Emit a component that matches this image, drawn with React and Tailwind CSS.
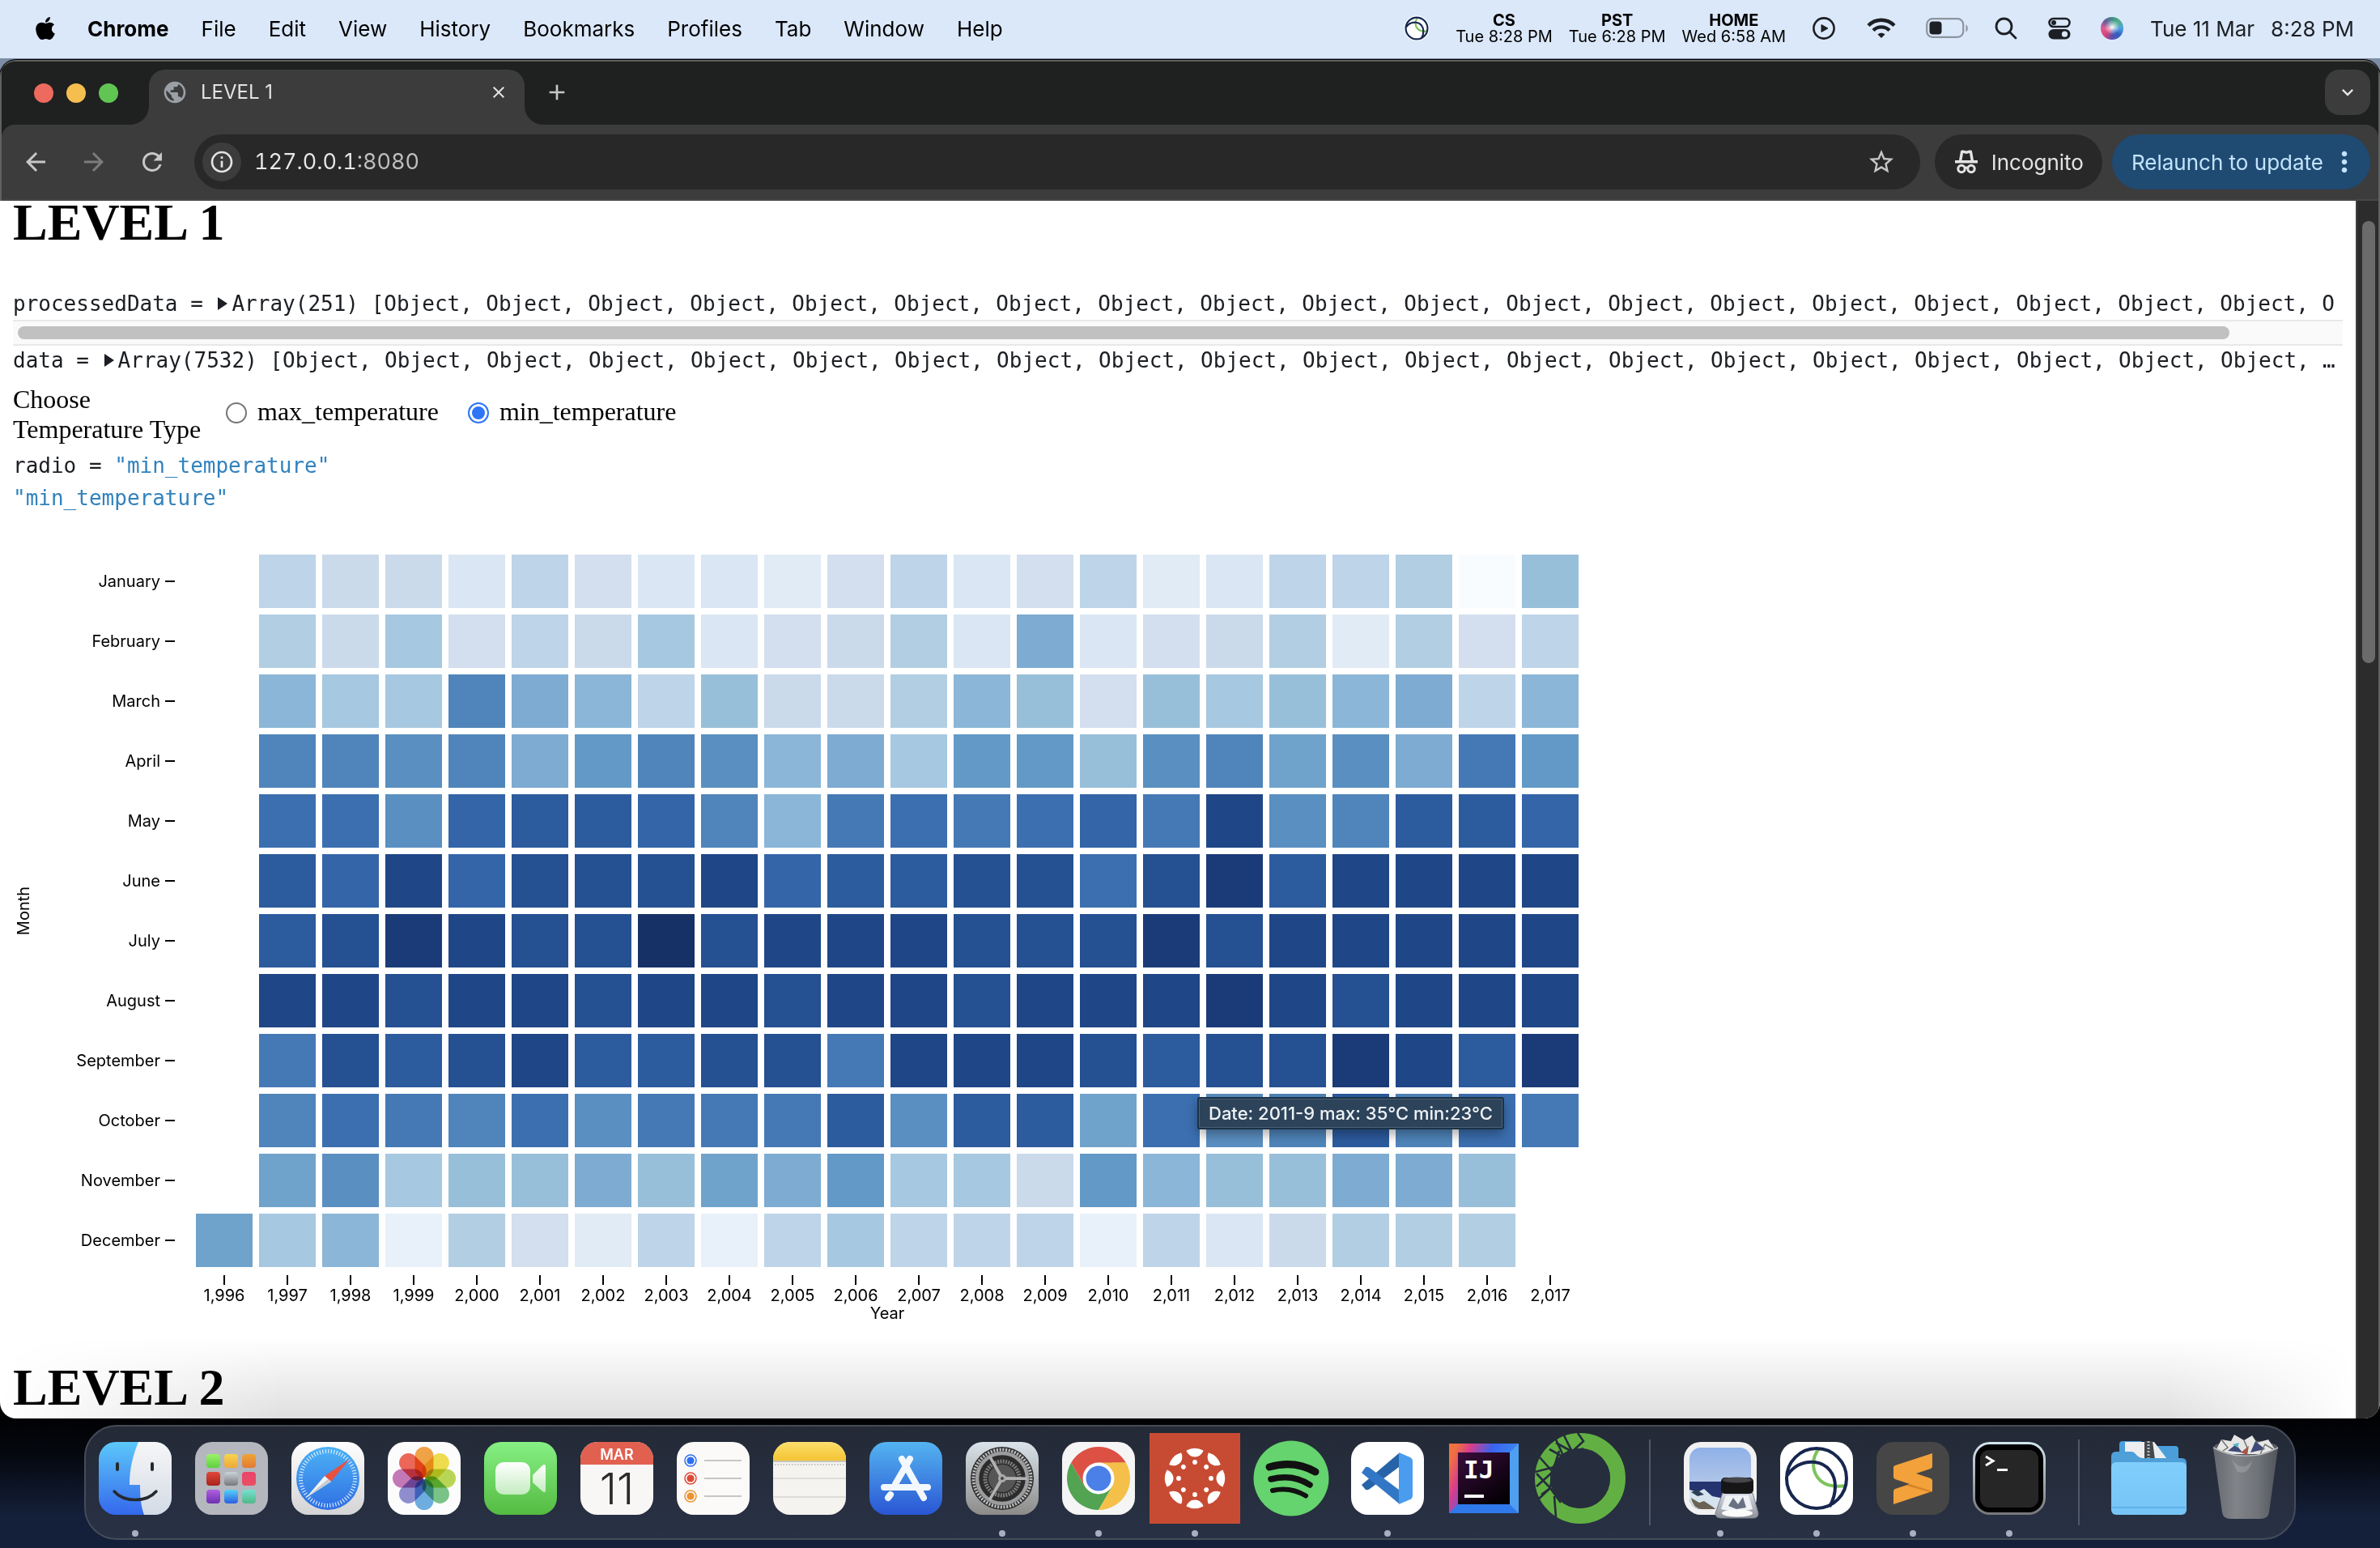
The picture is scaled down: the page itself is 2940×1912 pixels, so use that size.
import React, { useState } from "react";
import { FaApple } from "react-icons/fa";
import { MdArrowBack, MdArrowForward, MdRefresh, MdStarBorder, MdClose, MdAdd, MdPublic, MdInfoOutline, MdMoreVert, MdKeyboardArrowDown } from "react-icons/md";

/* ---------- Menu bar ---------- */

const MENUS = ["File", "Edit", "View", "History", "Bookmarks", "Profiles", "Tab", "Window", "Help"];
const CLOCKS = [
  ["CS", "Tue 8:28 PM"],
  ["PST", "Tue 6:28 PM"],
  ["HOME", "Wed 6:58 AM"],
];

function OrbitMark({ width = 4 }) {
  return (
    <g fill="none" strokeWidth={width}>
      <path d="M59 19C49 32 50 49 61 59C69 66 79 67 93 65" stroke="#7dc35b" />
      <circle cx="56" cy="56" r="37" stroke="#16264f" />
      <path d="M20 52C29 39 41 35 54 36C70 38 79 51 79 66C79 76 76 84 72 91" stroke="#16264f" />
    </g>
  );
}

function MenuBar() {
  return (
    <header className="flex h-[72px] shrink-0 items-center justify-between bg-[#dbe8fa] pb-0.5 pl-10 pr-8 text-[26px] text-black">
      <nav className="flex items-center gap-10">
        <button aria-label="Apple menu"><FaApple className="size-[32px]" /></button>
        <button className="-ml-1 font-bold">Chrome</button>
        {MENUS.map((m) => <button key={m}>{m}</button>)}
      </nav>
      <div className="flex items-center text-[#1c1f24]">
        <svg viewBox="12 12 88 88" className="mr-8 size-[32px]"><circle cx="56" cy="56" r="43" fill="#fff" /><OrbitMark width={6} /></svg>
        <div className="mr-[32px] flex gap-5 text-center text-xl leading-5 text-black">
          {CLOCKS.map(([n, t]) => (
            <div key={n}><div className="font-bold">{n}</div><div>{t}</div></div>
          ))}
        </div>
        <svg viewBox="0 0 30 30" className="mr-[38px] size-[30px]" fill="none" stroke="currentColor" strokeWidth="2.6"><circle cx="15" cy="15" r="12.6" /><path d="M12 10.5L20 15L12 19.5Z" fill="currentColor" strokeWidth="1" /></svg>
        <svg viewBox="0 0 36 28" className="mr-[37px] h-[28px] w-[36px]" fill="none" stroke="currentColor" strokeWidth="4.4"><path d="M2 10.5C11 1.500 25 1.500 34 10.500" /><path d="M8 16.500C13.500 11 22.500 11 28 16.500" /><path d="M13.500 21.500C16 19 20 19 22.500 21.500L18 26Z" fill="currentColor" stroke="none" /></svg>
        <svg viewBox="0 0 52 26" className="mr-[33px] h-[26px] w-[52px]"><rect x="1.200" y="1.200" width="45" height="22.600" rx="7" fill="none" stroke="#8d949e" strokeWidth="2.200" /><rect x="4.500" y="4.500" width="15" height="16" rx="4" fill="currentColor" /><path d="M49.500 8.500c3 1.500 3 7.500 0 9z" fill="#8d949e" /></svg>
        <svg viewBox="0 0 28 28" className="mr-[38px] size-[28px]" fill="none" stroke="currentColor" strokeWidth="2.800" strokeLinecap="round"><circle cx="11.500" cy="11.500" r="9.500" /><path d="M18.500 18.500L26 26" /></svg>
        <svg viewBox="0 0 28 28" className="mr-[37px] size-[28px]" fill="none" stroke="currentColor" strokeWidth="2.600"><rect x="1.500" y="2" width="25" height="10" rx="5" /><circle cx="7" cy="7" r="3" fill="currentColor" stroke="none" /><rect x="0.500" y="15" width="27" height="12.500" rx="6.200" fill="currentColor" stroke="none" /><circle cx="20.500" cy="21.200" r="3.600" fill="#dbe8fa" stroke="none" /></svg>
        <span className="mr-[33px] size-[28px] rounded-full bg-[radial-gradient(circle_at_50%_45%,#fff_0,#ffffff88_18%,transparent_45%),conic-gradient(#3d8c86,#52b08c,#4b9fe0,#2f5fc0,#5b4fae,#d2457c,#e35a8d,#6d5a9c,#3d8c86)]" />
        <span className="mr-5">Tue 11 Mar</span>
        <span>8:28 PM</span>
      </div>
    </header>
  );
}

/* ---------- Browser chrome ---------- */

function TabStrip() {
  return (
    <div className="flex h-[78px] shrink-0 items-end border-x-2 border-[#5f6260] bg-[#1f2120] pl-10 pr-2.5">
      <div className="mb-[27px] flex gap-4">
        <button aria-label="Close window" className="size-6 rounded-full bg-[#ed6a5e]" />
        <button aria-label="Minimise window" className="size-6 rounded-full bg-[#f5bf4f]" />
        <button aria-label="Zoom window" className="size-6 rounded-full bg-[#61c554]" />
      </div>
      <svg viewBox="0 0 24 24" className="ml-3.5 size-6" fill="#3c3c3c"><path d="M24 0V24H0C14 24 24 14 24 0Z" /></svg>
      <div className="flex h-[68px] w-[464px] items-center rounded-t-[20px] bg-[#3c3c3c] pb-3 pl-4 pr-5 text-2xl text-[#e3e3e3]">
        <MdPublic className="size-[32px] text-[#9aa0a6]" />
        <span className="ml-4 flex-1">LEVEL 1</span>
        <button aria-label="Close tab"><MdClose className="size-6" /></button>
      </div>
      <svg viewBox="0 0 24 24" className="size-6" fill="#3c3c3c"><path d="M0 0V24H24C10 24 0 14 0 0Z" /></svg>
      <button aria-label="New tab" className="mb-6 text-[#c7c7c7]"><MdAdd className="size-[32px]" /></button>
      <button aria-label="Search tabs" className="mb-3 ml-auto flex size-14 items-center justify-center rounded-[18px] bg-[#3c3c3c] text-[#e3e3e3]"><MdKeyboardArrowDown className="size-[28px]" /></button>
    </div>
  );
}

function Toolbar() {
  return (
    <div className="border-x-2 border-[#5f6260] bg-[#1f2120]">
      <div className="flex h-[94px] items-center rounded-t-[16px] border-b-2 border-[#474747] bg-[#3c3c3c] pl-6 pr-2.5 text-[#c7c7c7]">
        <button aria-label="Back" className="mr-9"><MdArrowBack className="size-[36px]" /></button>
        <button aria-label="Forward" className="mr-9 text-[#7c7c7c]"><MdArrowForward className="size-[36px]" /></button>
        <button aria-label="Reload" className="mr-[34px]"><MdRefresh className="size-[36px]" /></button>
        <div className="flex h-[68px] flex-1 items-center rounded-full bg-[#282828] pl-2.5 pr-[30px]">
          <button aria-label="Site information" className="flex size-12 items-center justify-center rounded-full bg-[#3c3c3c] text-[#e3e3e3]"><MdInfoOutline className="size-[32px]" /></button>
          <input aria-label="Address" defaultValue="127.0.0.1:8080" className="ml-4 min-w-0 flex-1 bg-[linear-gradient(90deg,#e8e8e8_126px,#c0c0c0_126px)] bg-clip-text text-[27px] tabular-nums text-transparent caret-white outline-none" />
          <button aria-label="Bookmark this page"><MdStarBorder className="size-[36px]" /></button>
        </div>
        <button className="ml-[18px] flex h-[68px] items-center gap-[15px] rounded-full bg-[#282828] pl-[23px] pr-[23px] text-[26px] text-[#e3e3e3]">
          <svg viewBox="0 0 32 32" className="size-[32px]" fill="currentColor"><path fillRule="evenodd" d="M9 2.500Q10 1 12 1.500L16 2.500L20 1.500Q22 1 23 2.500L25 14H30V17.500H2V14H7ZM12 5L10.500 14H21.500L20 5L16 6Z" /><g fill="none" stroke="currentColor" strokeWidth="3"><circle cx="10" cy="24.500" r="4.200" /><circle cx="22" cy="24.500" r="4.200" /><path d="M14 23.500Q16 22.500 18 23.500" /></g></svg>
          Incognito
        </button>
        <button className="ml-3 flex h-[68px] items-center gap-1.5 rounded-full bg-[#1f4a72] pl-6 pr-3 text-[26px] text-[#c2e3fb]">
          Relaunch to update
          <MdMoreVert className="size-[40px]" />
        </button>
      </div>
    </div>
  );
}

/* ---------- Heat map ---------- */

const SHADES = {
  a: "#f9fcff", b: "#e8f1fa", c: "#e1ebf5", d: "#dae6f3", e: "#d3dfee", f: "#cadaeb", g: "#bed4e8", h: "#b2cee3",
  i: "#a6c8e0", j: "#98bfd9", k: "#8bb6d7", l: "#7dabd1", m: "#70a3cb", n: "#6399c7", o: "#5a8fc1", p: "#4f85ba",
  q: "#4579b5", r: "#3c6fb0", s: "#3365a8", t: "#2c5b9e", u: "#255092", v: "#1f4687", w: "#1b3a78", x: "#163166",
};
const ROWS = [
  ["January", " gffdgeddcegdegcdgghaj"],
  ["February", " hfiegfidefhdldefhcheg"],
  ["March", " kiiplkgjffhkjejijklgk"],
  ["April", " ppoplnpoklinnjopmolqn"],
  ["May", " rrosttspkqrqrsqvoptts"],
  ["June", " tsvsuuuvsttuuruwtvvvv"],
  ["July", " tuwvuuxuvvvuuuwuvvvvv"],
  ["August", " vvuvvuvvuvvuvvvwvuvvv"],
  ["September", " qutuvttuuqvvvutuuwvtw"],
  ["October", " prqproqqqtottmroptprq"],
  ["November", " moijjljmlniifnkjjllj "],
  ["December", "mikbhecgbgigggbgdfhhh "],
];

function HeatMap() {
  return (
    <div className="relative w-max font-[Inter,sans-serif]">
      <svg width="1960" height="1000" className="block text-xl" role="img" aria-label="Monthly minimum temperature">
        {ROWS.map(([month, codes], r) => (
          <g key={month}>
            <text x="182" y={90 + r * 74} textAnchor="end">{month}</text>
            <rect x="188" y={82 + r * 74} width="12" height="2" />
            {[...codes].map((c, i) => c !== " " && <rect key={i} x={226 + i * 78} y={50 + r * 74} width="70" height="66" fill={SHADES[c]} />)}
          </g>
        ))}
        {[...ROWS[0][1]].map((_, i) => (
          <g key={i}>
            <rect x={260 + i * 78} y="940" width="2" height="12" />
            <text x={261 + i * 78} y="972" textAnchor="middle">{(1996 + i).toLocaleString("en-US")}</text>
          </g>
        ))}
        <text x="1080" y="994" textAnchor="middle">Year</text>
        <text transform="translate(20 490) rotate(-90)" textAnchor="middle">Month</text>
      </svg>
      <div role="tooltip" className="absolute left-[1463px] top-[720px] flex h-[40px] items-center rounded-[3px] border-2 border-[#1b3247] bg-[#2d435a] px-3 text-[22px] font-medium text-[#eef2f5] shadow-[inset_0_0_0_1px_#4c6175,0_6px_14px_#0005]">
        Date: 2011-9 max: 35°C min:23°C
      </div>
    </div>
  );
}

/* ---------- Page ---------- */

function ObjectList({ label, size, last }) {
  return (
    <div className="flex h-9 items-center overflow-hidden whitespace-pre leading-9">
      <span className="shrink-0">{label} = </span>
      <svg viewBox="0 0 12 16" className="ml-0.5 mr-1 h-4 w-3.5 shrink-0" fill="currentColor"><path d="M0 0L12 8L0 16Z" /></svg>
      <span className="shrink-0">Array({size}) [</span>
      {Array.from({ length: last }, (_, i) => <span key={i} className="w-[126px] shrink-0">Object,</span>)}
      <span className="shrink-0">{label === "data" ? "…" : "O"}</span>
    </div>
  );
}

const MONO = "font-['DejaVu_Sans_Mono',monospace] text-[26px] text-[#1b1e23]";

function Page() {
  const [kind, setKind] = useState("min_temperature");
  return (
    <div className="relative flex min-h-0 flex-1 overflow-hidden border-r-2 border-[#5f6260] bg-white text-black">
      <main className="min-w-0 flex-1 overflow-hidden px-4 font-['Liberation_Serif',serif] text-[32px]">
        <h1 className="text-[64px] font-bold leading-[54px]">LEVEL 1</h1>
        <section className={`mt-[55px] ${MONO}`}>
          <ObjectList label="processedData" size={251} last={19} />
          <div className="mt-0.5 border-y-2 border-[#e8e8e8] bg-[#fafafa] px-1.5 py-1.5">
            <div className="h-4 w-61/64 rounded-full bg-[#c1c1c1]" />
          </div>
          <ObjectList label="data" size={7532} last={20} />
        </section>
        <div role="radiogroup" aria-labelledby="kind-label" className="mt-3 flex items-center leading-[37px]">
          <span id="kind-label" className="w-[263px] shrink-0">Choose<br />Temperature Type</span>
          <div className="flex gap-[36px] pb-2">
            {["max_temperature", "min_temperature"].map((k) => (
              <label key={k} className="flex items-center gap-[13px]">
                <input type="radio" name="kind" checked={kind === k} onChange={() => setKind(k)} className="mt-1 size-[26px] appearance-none rounded-full border-2 border-[#767676] bg-white checked:border-[#2f76f6] checked:bg-[#2f76f6] checked:shadow-[inset_0_0_0_3px_#fff]" />
                {k}
              </label>
            ))}
          </div>
        </div>
        <section className={`mt-1.5 leading-10 ${MONO}`}>
          <div>radio = <span className="text-[#3182bd]">"{kind}"</span></div>
          <div className="text-[#3182bd]">"{kind}"</div>
        </section>
        <HeatMap />
        <h1 className="mt-[52px] text-[64px] font-bold leading-[54px]">LEVEL 2</h1>
      </main>
      <div className="w-7 shrink-0 border-l-2 border-[#3f3f3f] bg-[#2c2c2c] pl-1.5 pt-[25px]">
        <div className="h-[546px] w-4 rounded-full bg-[#6b6b6b]" />
      </div>
      <div className="pointer-events-none absolute inset-x-0 bottom-0 mr-7 h-[100px] bg-linear-to-b from-transparent to-[#00000020] [mask-image:linear-gradient(90deg,transparent,#000_12%,#000_92%,transparent)]" />
    </div>
  );
}

/* ---------- Dock ---------- */

const Tile = ({ fill, stroke }) => <rect x="11" y="11" width="90" height="90" rx="21" fill={fill} stroke={stroke} />;
const Grad = ({ id, from, to, x2 = 0, y2 = 1 }) => (
  <linearGradient id={id} x1="0" y1="0" x2={x2} y2={y2}><stop offset="0" stopColor={from} /><stop offset="1" stopColor={to} /></linearGradient>
);

const Finder = () => (
  <>
    <Grad id="fb" from="#5cc8fa" to="#3468ec" /><Grad id="fw" from="#f6f6f7" to="#d3dbe6" />
    <clipPath id="fc"><rect x="11" y="11" width="90" height="90" rx="21" /></clipPath>
    <g clipPath="url(#fc)"><rect x="11" y="11" width="90" height="90" fill="url(#fb)" /><path d="M60 11C53 28 49 44 49 64H62C62 78 63 90 67 101H101V11Z" fill="url(#fw)" /></g>
    <g stroke="#26292e" strokeWidth="4" strokeLinecap="round" fill="none"><path d="M34 38V45M77 38V45" /><path d="M30 72C42 86 70 86 82 72" strokeWidth="3.500" /></g>
  </>
);
const PAD = [["#9cf26b", "#5ed03f"], ["#f8d54c", "#eda83a"], ["#eea437", "#e27b34"], ["#e0483a", "#a8221b"], ["#c9d4d9", "#77797c"], ["#ea4468", "#e95065"], ["#b05fe0", "#6e2fb2"], ["#55d2fa", "#2a5fe0"], ["#79e0d0", "#4fb887"]];
const Launchpad = () => (
  <>
    <Tile fill="#b4b7bd" />
    {PAD.map(([a, b], i) => <g key={i}><Grad id={"lp" + i} from={a} to={b} /><rect x={25 + (i % 3) * 22} y={26 + Math.floor(i / 3) * 22} width="17" height="17" rx="4" fill={`url(#lp${i})`} /></g>)}
  </>
);
const Safari = () => (
  <>
    <Grad id="sf" from="#ffffff" to="#d4d4d6" /><Grad id="sb" from="#4db2f4" to="#2f6fe4" />
    <Tile fill="url(#sf)" /><circle cx="56" cy="56" r="39" fill="url(#sb)" />
    <circle cx="56" cy="56" r="33.500" fill="none" stroke="#e6f2ff" strokeWidth="5" strokeDasharray="1.100 2.408" />
    <path d="M83 32L52 53L60 60Z" fill="#e8513f" /><path d="M29 80L52 53L60 60Z" fill="#f4f4f4" /><path d="M29 80L56 57L60 60Z" fill="#c6ccd3" />
  </>
);
const PETALS = ["#f29a33", "#f0dc3a", "#b4d445", "#6cc07a", "#5ea6df", "#8484cc", "#c06bb0", "#ec5848"];
const Photos = () => (
  <>
    <Tile fill="#fcfcfd" />
    {PETALS.map((c, i) => <rect key={c} x="44.500" y="17" width="23" height="38" rx="11.500" fill={c} className="mix-blend-multiply" opacity="0.9" transform={`rotate(${i * 45} 56 56)`} />)}
  </>
);
const FaceTime = () => (
  <>
    <Grad id="ft" from="#86f084" to="#54bb41" /><Grad id="fcam" from="#ffffff" to="#c4ecc0" />
    <Tile fill="url(#ft)" /><rect x="25" y="36" width="43" height="40" rx="10" fill="url(#fcam)" /><path d="M71 52L83 40Q87 37 87 42V70Q87 75 83 72L71 61Z" fill="url(#fcam)" />
  </>
);
const Calendar = () => (
  <>
    <Tile fill="#f8f7f5" /><path d="M11 39V32A21 21 0 0 1 32 11H80A21 21 0 0 1 101 32V39Z" fill="#e2604f" />
    <text x="56" y="33" textAnchor="middle" fontSize="18" fontWeight="600" fill="#fff">MAR</text>
    <text x="56" y="88" textAnchor="middle" fontSize="54" fontWeight="300" fill="#2a2a2a">11</text>
  </>
);
const Reminders = () => (
  <>
    <Tile fill="#fbfaf9" />
    {["#2e6ff2", "#df4a35", "#ea9430"].map((c, i) => (
      <g key={c}><circle cx="28" cy={34 + i * 22} r="4.600" fill={c} /><circle cx="28" cy={34 + i * 22} r="7" fill="none" stroke={c} strokeWidth="1.500" /><path d={`M45 ${34 + i * 22}H91`} stroke="#b4b4b6" strokeWidth="1.600" /></g>
    ))}
  </>
);
const Notes = () => (
  <>
    <Grad id="ny" from="#fbdf6c" to="#f5c433" /><Tile fill="#f4f3ef" />
    <path d="M11 34V32A21 21 0 0 1 32 11H80A21 21 0 0 1 101 32V34Z" fill="url(#ny)" />
    <path d="M11 35H101" stroke="#b9b6ab" strokeWidth="1.500" /><path d="M13 39H100" stroke="#c4c2bb" strokeWidth="1.800" strokeDasharray="1.500 2" /><path d="M11 56H101M11 79H101" stroke="#d7d6d3" strokeWidth="1.600" />
  </>
);
const AppStore = () => (
  <>
    <Grad id="as" from="#54b4f0" to="#2a56d4" /><Tile fill="url(#as)" />
    <g stroke="#f3f8fe" strokeWidth="8" strokeLinecap="round"><path d="M29 67H83" /><path d="M61 32L43 63" /><path d="M51 32L78 80" /><path d="M37 76L34 80" /></g>
  </>
);
const Settings = () => (
  <>
    <Grad id="st" from="#d9e3ea" to="#8c8b89" /><Tile fill="url(#st)" />
    <circle cx="56" cy="56" r="39" fill="#2c2c2d" /><circle cx="56" cy="56" r="35.500" fill="none" stroke="#b9babb" strokeWidth="4" strokeDasharray="2.200 1.518" />
    <circle cx="56" cy="56" r="31" fill="none" stroke="#9b9c9d" strokeWidth="4.500" />
    <circle cx="56" cy="56" r="21" fill="none" stroke="#7d7d7d" strokeWidth="5" strokeDasharray="2 1.300" /><circle cx="56" cy="56" r="17" fill="#555" />
    {[0, 120, 240].map((a) => <path key={a} d="M56 54L87 54.500V58L56 58Z" fill="#b0b1b2" transform={`rotate(${a} 56 56)`} />)}
    <circle cx="56" cy="56" r="5" fill="#a9aaab" /><circle cx="56" cy="56" r="2" fill="#444" />
  </>
);
const Chrome = () => (
  <>
    <Tile fill="#f5f5f5" />
    <path d="M56 56L22.200 36.500A39 39 0 0 1 89.800 36.500Z" fill="#dd5144" /><path d="M22.200 36.500A39 39 0 0 0 56 95L73 66L56 56L39 66Z" fill="#52a352" />
    <path d="M89.800 36.500A39 39 0 0 1 56 95L73 66L73 36.500Z" fill="#f4c04a" /><path d="M56 36.500H89.800L73 66L56 56Z" fill="#f4c04a" /><path d="M22.200 36.500L39 66L56 56L56 36.500Z" fill="#dd5144" />
    <circle cx="56" cy="56" r="19.500" fill="#fff" /><circle cx="56" cy="56" r="15.500" fill="#4a80e8" />
  </>
);
const Canvas = () => (
  <>
    <rect width="112" height="112" fill="#c74b33" />
    {Array.from({ length: 8 }, (_, i) => <g key={i} fill="#fff" transform={`rotate(${i * 45} 56 56)`}><path d="M45.500 21.500Q56 16 66.500 21.500C65 26 61 29.500 56 29.500C51 29.500 47 26 45.500 21.500Z" /><circle cx="56" cy="36" r="2.900" /></g>)}
  </>
);
const Spotify = () => (
  <><circle cx="56" cy="56" r="46.500" fill="#65d36e" /><g fill="none" stroke="#111" strokeLinecap="round"><path d="M29 42Q60 33 86 48" strokeWidth="9" /><path d="M31 57Q58 50 79 64" strokeWidth="7.500" /><path d="M33 71Q55 66 74 77.500" strokeWidth="6" /></g></>
);
const VSCode = () => (
  <>
    <Tile fill="#fff" />
    <path d="M70 25L24 64L29 70Q31 71 34 69L70 42Z" fill="#2763a8" /><path d="M70 87L24 49L29 42Q31 41 34 43L70 70Z" fill="#3277c5" />
    <path d="M70 24L84 30Q87 31.500 87 35V77Q87 80.500 84 82L70 88Z" fill="#4a9cee" />
  </>
);
const IntelliJ = () => (
  <>
    <linearGradient id="ij" x1="0" y1="0.300" x2="1" y2="0.700"><stop offset="0" stopColor="#f0713f" /><stop offset="0.180" stopColor="#d93d8c" /><stop offset="0.450" stopColor="#3a62ee" /><stop offset="0.800" stopColor="#3b8bf2" /><stop offset="1" stopColor="#7a5fe8" /></linearGradient>
    <rect x="13" y="13" width="86" height="86" fill="url(#ij)" /><path d="M13 99L24 88H88L99 99Z" fill="#2f79ea" /><path d="M99 13L88 24V88L99 99Z" fill="#4e9ff0" />
    <Grad id="ik" from="#3a0d3c" to="#050006" x2={0.7} /><rect x="24" y="24" width="64" height="64" fill="url(#ik)" />
    <text x="31" y="56" fontSize="31" fontWeight="700" fill="#fff" fontFamily="DejaVu Sans Mono, monospace">IJ</text><rect x="32" y="76" width="24" height="4" fill="#fff" />
  </>
);
const Anaconda = () => (
  <>
    <circle cx="56" cy="56" r="46.500" fill="none" stroke="#62b043" strokeWidth="19" />
    <g fill="none" stroke="#242c3c" strokeWidth="2.600"><path d="M53 0L60 10L46 23L36 3M46 23L26 12M60 19L36 30L18 20M36 30L26 8M36 30L22 48L6 30M22 48L30 22M24 42L0 48M22 48L2 66M22 48L19 68L2 50M19 68L4 82M19 68L32 86M19 68L8 76M24 78L26 104" /></g>
    <circle cx="56" cy="56" r="37" fill="#262e3e" />
  </>
);
const Preview = () => (
  <>
    <Grad id="pv" from="#8fb1e8" to="#c9d4e8" /><Grad id="jar" from="#d7dce6" to="#8e9298" />
    <Tile fill="#f1f1f2" /><rect x="18" y="18" width="76" height="76" rx="14" fill="url(#pv)" /><path d="M18 60H94V80A14 14 0 0 1 80 94H32A14 14 0 0 1 18 80Z" fill="#25336f" />
    <path d="M18 70L28 73L36 69L46 78L56 80V94H32Q20 93 18 82Z" fill="#d5e3ee" /><path d="M20 80L30 86L36 84L48 92L50 94H32Q22 92 20 80Z" fill="#6b6253" /><path d="M20 73L27 70L36 76L28 78Z" fill="#2d3f57" />
    <path d="M59 74H96L103 99Q103 105 97 105H57Q50 105 50 99Z" fill="url(#jar)" stroke="#7b7f86" /><path d="M63 77H91L96 94Q77 99 57 94Z" fill="#eef1f5" /><path d="M66 90L72 80L78 88L84 79L88 92L76 94Z" fill="#687282" /><ellipse cx="77" cy="99" rx="19" ry="4.500" fill="#fafafa" />
    <rect x="57" y="55" width="40" height="20" rx="5" fill="#161617" /><ellipse cx="77" cy="58" rx="18" ry="3.500" fill="#45464a" />
  </>
);
const Orbit = () => <><Tile fill="#fff" /><OrbitMark /></>;
const Sublime = () => (
  <><Tile fill="#464646" /><path d="M80 25V41Q80 43 78 44L60 50L78 56Q80 57 80 59V72L32 88V72Q32 70 34 69L52 63L34 57Q32 56 32 54V42Q32 41 34 40Z" fill="#f3a13a" /><path d="M52 63L80 72L77 73L48 65Z" fill="#d8832a" /></>
);
const Terminal = () => (
  <>
    <Grad id="tm" from="#d3e6f0" to="#777679" /><Tile fill="url(#tm)" /><rect x="14" y="14" width="84" height="84" rx="18" fill="#020202" /><rect x="20" y="21" width="72" height="71" rx="11" fill="#262626" />
    <path d="M27 29L36 34.500L27 40" fill="none" stroke="#fff" strokeWidth="3" /><path d="M41 45.500H54" stroke="#fff" strokeWidth="3" />
  </>
);
const Folder = () => (
  <>
    <Grad id="fd" from="#7fcefb" to="#76c4f6" /><path d="M19 14Q19 10 23 10H46L52 16H88Q92 16 92 20V50H19Z" fill="#4a9fdb" /><path d="M26 11H62L84 40H26Z" fill="#eceef0" /><path d="M50 10H60L64 40H50Z" fill="#46494c" /><path d="M55 10V36" stroke="#b9bcc0" strokeWidth="3" strokeDasharray="2 2" />
    <path d="M9 29Q9 23 15 23H34Q37 23 40 27Q44 31 48 31H96Q102 31 102 37V60H9Z" fill="#4f9fd8" /><rect x="9" y="36" width="93" height="65" rx="6" fill="url(#fd)" /><path d="M10 92H101" stroke="#5fb2ea" strokeWidth="2" />
  </>
);
const Trash = () => (
  <>
    <linearGradient id="tr" x1="0" x2="1" y1="0" y2="0"><stop offset="0" stopColor="#6b6e73" /><stop offset="0.350" stopColor="#888b8f" /><stop offset="0.700" stopColor="#75787c" /><stop offset="1" stopColor="#54585e" /></linearGradient>
    <ellipse cx="56" cy="18" rx="40" ry="9" fill="#5b5e62" />
    <path d="M20 20L26 8L38 10L42 2L54 9L64 3L70 12L84 8L92 20L74 26H38Z" fill="#e6e6e4" /><path d="M34 22L44 14L52 24ZM62 24L68 10L80 20Z" fill="#3f4a78" /><path d="M40 14L48 12L46 18Z" fill="#55b7c9" /><path d="M50 24L60 16L58 27Z" fill="#a4574a" /><path d="M26 8L34 18L28 22M74 26L80 14L90 20M54 9L58 18" stroke="#70716f" strokeWidth="1.500" fill="none" />
    <path d="M16 18Q36 29 56 28Q76 29 96 18L85 98Q84 106 74 106H38Q28 106 27 98Z" fill="url(#tr)" opacity="0.93" /><path d="M38 32Q52 50 64 34Q60 52 46 48Z" fill="#b0b2b5" opacity="0.400" />
    <path d="M16 18Q36 29 56 28Q76 29 96 18" fill="none" stroke="#b5b8bb" strokeWidth="1.500" />
  </>
);

const DOCK = [
  [["Finder", Finder, 1], ["Launchpad", Launchpad], ["Safari", Safari], ["Photos", Photos], ["FaceTime", FaceTime], ["Calendar", Calendar], ["Reminders", Reminders], ["Notes", Notes], ["App Store", AppStore], ["System Settings", Settings, 1], ["Google Chrome", Chrome, 1], ["Canvas", Canvas, 1], ["Spotify", Spotify], ["Visual Studio Code", VSCode, 1], ["IntelliJ IDEA", IntelliJ], ["Anaconda", Anaconda]],
  [["Preview", Preview, 1], ["Network", Orbit, 1], ["Sublime Text", Sublime, 1], ["Terminal", Terminal, 1]],
  [["Downloads", Folder], ["Trash", Trash]],
];

function Dock() {
  return (
    <footer className="flex shrink-0 justify-center pb-2.5 pt-2">
      <div className="flex h-[142px] rounded-[40px] border-2 border-[#454b58] bg-linear-to-b from-[#242a36] to-[#283145] px-px">
        {DOCK.map((group, g) => (
          <React.Fragment key={g}>
            {g > 0 && <div className="flex w-[54px] justify-center pb-4 pt-4"><div className="w-0.5 bg-[#515866]" /></div>}
            {group.map(([name, Icon, running]) => (
              <button key={name} aria-label={name} className="flex w-[119px] flex-col items-center pt-2">
                <svg viewBox="0 0 112 112" className="size-[112px]" fontFamily="Inter, sans-serif"><Icon /></svg>
                {running && <span className="mt-2 size-2 rounded-full bg-[#a9afc0]" />}
              </button>
            ))}
          </React.Fragment>
        ))}
      </div>
    </footer>
  );
}

export default function App() {
  return (
    <div className="flex h-screen flex-col overflow-hidden bg-[linear-gradient(#7d8da6_0,#7d8da6_120px,#000_120px,#000_91%,#05080f_94%,#14203a_98%)] font-[Inter,sans-serif]">
      <MenuBar />
      <div className="mt-0.5 flex min-h-0 flex-1 flex-col overflow-hidden rounded-[20px] border-t-2 border-[#5f6260] bg-[#1f2120] shadow-[0_0_0_1px_#000]">
        <TabStrip />
        <Toolbar />
        <Page />
      </div>
      <Dock />
    </div>
  );
}
